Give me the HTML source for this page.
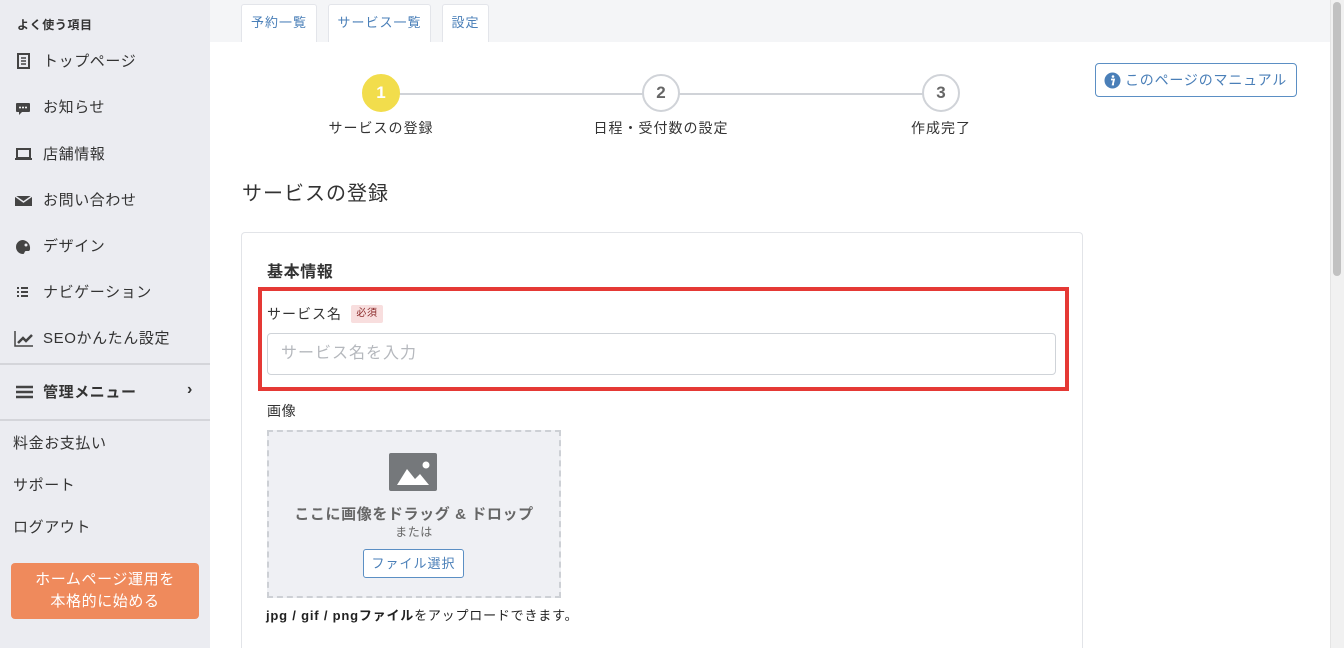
<!DOCTYPE html>
<html style="width:1344px;height:648px;overflow:hidden"><head><meta charset="utf-8"><style>
*{box-sizing:border-box;margin:0;padding:0}
body{width:1344px;height:648px;overflow:hidden;font-family:"Liberation Sans","Noto Sans CJK JP",sans-serif;color:#333;background:#fff;position:relative;letter-spacing:0.6px}
.abs{position:absolute}
#side{left:0;top:0;width:210px;height:648px;background:#ebecf1}
.si{position:absolute;left:14px;font-size:15px;color:#333;display:flex;align-items:center}
.si .ic{width:19px;margin-right:10px;display:flex;align-items:center;justify-content:flex-start}
.tab{position:absolute;top:4px;height:38px;background:#fff;border:1px solid #e3e5ea;border-bottom:none;border-radius:3px 3px 0 0;color:#4a7fb8;font-size:13px;line-height:36px;text-align:center}
.circ{position:absolute;width:38px;height:38px;border-radius:50%;border:2px solid #d0d3d8;background:#fff;font-weight:bold;font-size:17px;color:#666;text-align:center;line-height:34px;letter-spacing:0}
.lbl{position:absolute;font-size:14px;color:#333;text-align:center;width:200px;letter-spacing:1px}
</style></head><body>
<div id="side" class="abs">
<div class="abs" style="left:17px;top:16px;font-size:12px;font-weight:bold">よく使う項目</div>
<div class="si" style="top:50px"><span class="ic"><svg width="16" height="16"><rect x="4" y="1" width="11" height="14" fill="none" stroke="#444" stroke-width="2"/><path d="M7 5h5M7 8h5M7 11h5" stroke="#444" stroke-width="1.5"/></svg></span>トップページ</div>
<div class="si" style="top:96px"><span class="ic"><svg width="18" height="16"><rect x="2" y="4" width="14" height="9" rx="1" fill="#444"/><path d="M5 13v3l3-3" fill="#444"/><circle cx="6" cy="8.5" r="1" fill="#fff"/><circle cx="9" cy="8.5" r="1" fill="#fff"/><circle cx="12" cy="8.5" r="1" fill="#fff"/></svg></span>お知らせ</div>
<div class="si" style="top:143px"><span class="ic"><svg width="19" height="16"><rect x="3" y="3" width="13" height="9" fill="none" stroke="#444" stroke-width="2"/><rect x="1" y="12" width="17" height="2" fill="#444"/></svg></span>店舗情報</div>
<div class="si" style="top:189px"><span class="ic"><svg width="19" height="16"><rect x="1" y="4" width="17" height="10" fill="#444"/><path d="M1 4l8.5 6 8.5-6" fill="none" stroke="#ebecf1" stroke-width="1.5"/></svg></span>お問い合わせ</div>
<div class="si" style="top:235px"><span class="ic"><svg width="18" height="16"><path d="M9 2a7 7 0 1 0 0 14c2 0 1-3 3-3h3a2 2 0 0 0 1-2A8 8 0 0 0 9 2z" fill="#444"/><circle cx="12" cy="7" r="1.5" fill="#ebecf1"/></svg></span>デザイン</div>
<div class="si" style="top:281px"><span class="ic"><svg width="16" height="16"><path d="M3 4h2M3 8h2M3 12h2M7 4h7M7 8h7M7 12h7" stroke="#444" stroke-width="2"/></svg></span>ナビゲーション</div>
<div class="si" style="top:327px"><span class="ic"><svg width="22" height="18"><path d="M1 2v15h21" fill="none" stroke="#444" stroke-width="1.5"/><path d="M4 14l5-5 3 3 6-6" fill="none" stroke="#444" stroke-width="2.5"/></svg></span>SEOかんたん設定</div>
<div class="abs" style="left:0;top:363px;width:210px;height:2px;background:#d4d5da"></div>
<div class="si" style="top:381px;font-weight:bold;left:16px"><span class="ic" style="width:17px;margin-right:10px"><svg width="18" height="16"><path d="M0 3h18M0 8h18M0 13h18" stroke="#444" stroke-width="2.5"/></svg></span>管理メニュー</div>
<div class="abs" style="left:187px;top:381px;font-size:16px;font-weight:bold">›</div>
<div class="abs" style="left:0;top:419px;width:210px;height:2px;background:#d4d5da"></div>
<div class="si" style="top:432px;left:13px">料金お支払い</div>
<div class="si" style="top:474px;left:13px">サポート</div>
<div class="si" style="top:516px;left:13px">ログアウト</div>
<div class="abs" style="left:11px;top:563px;width:188px;height:56px;background:#ef8a5c;border-radius:4px;color:#fff;font-size:15px;text-align:center;line-height:22px;padding-top:6px">ホームページ運用を<br>本格的に始める</div>
</div>
<div class="abs" style="left:210px;top:0;width:1120px;height:42px;background:#f4f5f7"></div>
<div class="tab" style="left:241px;width:76px;letter-spacing:1px">予約一覧</div>
<div class="tab" style="left:328px;width:103px;letter-spacing:1px">サービス一覧</div>
<div class="tab" style="left:442px;width:47px;letter-spacing:1px">設定</div>
<div class="abs" style="left:1330px;top:0;width:14px;height:648px;background:#f1f1f1;border-left:1px solid #e4e4e4"></div>
<div class="abs" style="left:1333px;top:2px;width:8px;height:274px;background:#c1c1c1;border-radius:4px"></div>
<div class="abs" style="left:381px;top:93px;width:560px;height:2px;background:#d0d3d8"></div>
<div class="circ" style="left:362px;top:74px;background:#f2dd4c;border-color:#f2dd4c;color:#fff">1</div>
<div class="circ" style="left:642px;top:74px">2</div>
<div class="circ" style="left:922px;top:74px">3</div>
<div class="lbl" style="left:281px;top:118px">サービスの登録</div>
<div class="lbl" style="left:561px;top:118px">日程・受付数の設定</div>
<div class="lbl" style="left:841px;top:118px">作成完了</div>
<div class="abs" style="left:1095px;top:63px;width:202px;height:34px;border:1px solid #5b8fc4;border-radius:4px;color:#4a7fb8;font-size:14px;line-height:32px;padding-left:8px;display:flex;align-items:center;letter-spacing:0.8px"><svg width="17" height="17" style="margin-right:4px"><circle cx="8.5" cy="8.5" r="8" fill="#4a7fb8"/><circle cx="9" cy="4.5" r="1.3" fill="#fff"/><path d="M7 7.5h3l-1.2 5h1.2" fill="none" stroke="#fff" stroke-width="1.8"/></svg>このページのマニュアル</div>
<div class="abs" style="left:242px;top:177px;font-size:20px;color:#333;letter-spacing:1px">サービスの登録</div>
<div class="abs" style="left:241px;top:232px;width:842px;height:416px;border:1px solid #e2e4e8;border-bottom:none;border-radius:4px 4px 0 0;background:#fff"></div>
<div class="abs" style="left:267px;top:258px;font-size:16px;font-weight:bold">基本情報</div>
<div class="abs" style="left:258px;top:287px;width:811px;height:104px;border:4px solid #e53935"></div>
<div class="abs" style="left:267px;top:304px;font-size:14px;letter-spacing:1px">サービス名</div>
<div class="abs" style="left:351px;top:305px;width:32px;height:18px;background:#f8dede;color:#8b2a2a;font-size:10px;line-height:18px;text-align:center;border-radius:2px">必須</div>
<div class="abs" style="left:267px;top:333px;width:789px;height:42px;border:1px solid #cfd3d8;border-radius:4px;color:#b5b8bd;font-size:16px;line-height:40px;padding-left:13px;letter-spacing:1px">サービス名を入力</div>
<div class="abs" style="left:267px;top:401px;font-size:14px">画像</div>
<div class="abs" style="left:267px;top:430px;width:294px;height:168px;border:2px dashed #cdd0d5;background:#eff0f4"></div>
<svg class="abs" style="left:389px;top:453px" width="48" height="38"><rect width="48" height="38" rx="2" fill="#75787b"/><path d="M8 32l10-16 8 10 5-5 9 11z" fill="#fff"/><circle cx="37" cy="12" r="3.5" fill="#fff"/></svg>
<div class="abs" style="left:267px;top:503px;width:294px;text-align:center;font-size:15px;font-weight:bold;color:#666;letter-spacing:0.6px">ここに画像をドラッグ &amp; ドロップ</div>
<div class="abs" style="left:267px;top:523px;width:294px;text-align:center;font-size:12px;color:#666">または</div>
<div class="abs" style="left:363px;top:549px;width:101px;height:29px;border:1px solid #5b8fc4;border-radius:3px;background:#fff;color:#4a7fb8;font-size:13px;text-align:center;line-height:27px;letter-spacing:1px">ファイル選択</div>
<div class="abs" style="left:266px;top:605px;font-size:13px;color:#222;letter-spacing:0.8px"><b>jpg / gif / pngファイル</b>をアップロードできます。</div>
</body></html>
